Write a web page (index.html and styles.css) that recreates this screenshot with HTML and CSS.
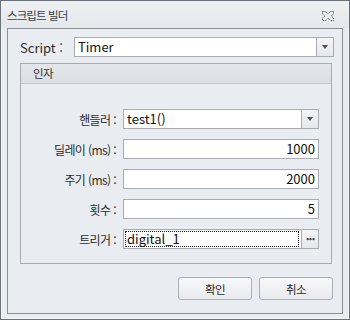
FILE: index.html
```html
<!DOCTYPE html>
<html lang="ko">
<head>
<meta charset="utf-8">
<link rel="stylesheet" href="styles.css">
</head>
<body>
<div class="window">
  <div class="titlebar">
    <span class="title">스크립트 빌더</span>
    <svg class="close" width="14" height="12" viewBox="0 0 14 12">
      <path d="M1.5 1.5h3l2.5 2.5 2.5-2.5h3v2.5l-2.5 2 2.5 2v2.5h-3L7 8 4.5 10.5h-3V8L4 6 1.5 4z" fill="none" stroke="#3c3f44" stroke-width="1" stroke-dasharray="1 1"/>
    </svg>
  </div>
  <div class="panel">
    <div class="script-row">
      <span class="script-label">Script :</span>
      <div class="combo wide">
        <span class="value">Timer</span>
        <span class="drop"><i class="tri"></i></span>
      </div>
    </div>
    <div class="group">
      <div class="group-head">인자</div>
      <div class="group-body">
        <div class="row">
          <span class="label">핸들러 :</span>
          <div class="combo">
            <span class="value">test1()</span>
            <span class="drop"><i class="tri"></i></span>
          </div>
        </div>
        <div class="row">
          <span class="label">딜레이 (ms) :</span>
          <div class="field num">1000</div>
        </div>
        <div class="row">
          <span class="label">주기 (ms) :</span>
          <div class="field num">2000</div>
        </div>
        <div class="row">
          <span class="label">횟수 :</span>
          <div class="field num">5</div>
        </div>
        <div class="row">
          <span class="label">트리거 :</span>
          <div class="combo">
            <span class="value focus">digital_1</span>
            <span class="drop dots">···</span>
          </div>
        </div>
      </div>
    </div>
    <div class="buttons">
      <button class="btn">확인</button>
      <button class="btn">취소</button>
    </div>
  </div>
</div>
</body>
</html>
```
FILE: styles.css
```css
* { box-sizing: border-box; }
html, body { margin: 0; padding: 0; }
body {
  width: 350px;
  height: 320px;
  background: #e9ecf0;
  font-family: "Noto Sans CJK KR", "Noto Sans", sans-serif;
  color: #1b1b1b;
}
.window {
  width: 350px;
  height: 320px;
  border: 1px solid #6c7279;
  box-shadow: inset 0 0 0 1px #f4f6f8;
  background: #e9ecf0;
  display: flex;
  flex-direction: column;
}
.titlebar {
  height: 27px;
  flex: none;
  display: flex;
  align-items: center;
  justify-content: space-between;
  padding: 0 14px 0 6px;
  background: linear-gradient(#eff1f4, #e4e7eb);
}
.title {
  font-size: 11.5px;
  color: #3a3d42;
  letter-spacing: -0.9px;
}
.close { display: block; margin-top: 2px; }
.panel {
  flex: 1;
  margin: 0 6px 5px 6px;
  border: 1px solid #8a8f95;
  padding: 8px 8px 0 12px;
  display: flex;
  flex-direction: column;
}
.script-row {
  display: flex;
  align-items: center;
  height: 20px;
}
.script-label {
  width: 54px;
  font-size: 13px;
  color: #2e2e2e;
}
.combo {
  flex: 1;
  height: 20px;
  border: 1px solid #a9adb3;
  background: #fff;
  display: flex;
}
.combo .value {
  flex: 1;
  font-size: 13px;
  line-height: 18px;
  padding-left: 3px;
  color: #111;
}
.combo .value.focus {
  margin: 1px 2px 1px 1px;
  line-height: 16px;
  padding-left: 2px;
  outline: 1px dotted #222;
  outline-offset: -1px;
}
.drop {
  width: 17px;
  flex: none;
  border-left: 1px solid #a9adb3;
  background: linear-gradient(#f3f4f6, #e6e8eb);
  display: flex;
  align-items: center;
  justify-content: center;
}
.tri {
  width: 0;
  height: 0;
  border-left: 3.5px solid transparent;
  border-right: 3.5px solid transparent;
  border-top: 4px solid #4d5157;
}
.dots {
  font-size: 12px;
  font-weight: bold;
  color: #444;
  letter-spacing: -1px;
  line-height: 18px;
}
.group {
  margin-top: 6px;
  margin-right: 2px;
  height: 201px;
  border: 1px solid #a9adb3;
  display: flex;
  flex-direction: column;
}
.group-head {
  height: 20px;
  flex: none;
  background: linear-gradient(#e2e5e9, #dcdfe3);
  border-bottom: 1px solid #c3c7cc;
  font-size: 11.5px;
  letter-spacing: -0.5px;
  line-height: 19px;
  padding-left: 12px;
  color: #333;
}
.group-body {
  padding: 25px 12px 0 0;
  display: flex;
  flex-direction: column;
  gap: 10px;
}
.row {
  display: flex;
  align-items: center;
  height: 20px;
}
.label {
  width: 102px;
  flex: none;
  text-align: right;
  padding-right: 7px;
  font-size: 12px;
  letter-spacing: -0.6px;
  color: #2e2e2e;
}
.field {
  flex: 1;
  height: 20px;
  border: 1px solid #a9adb3;
  background: #fff;
  font-size: 13px;
  line-height: 18px;
  padding: 0 3px;
  color: #111;
}
.num { text-align: right; }
.buttons {
  display: flex;
  justify-content: flex-end;
  gap: 7px;
  margin-top: 13px;
  padding-right: 1px;
}
.btn {
  width: 74px;
  height: 23px;
  border: 1px solid #abb0b6;
  border-radius: 3px;
  background: linear-gradient(#f7f8fa, #e9ebee);
  font-family: "Noto Sans CJK KR", sans-serif;
  font-size: 11.5px;
  letter-spacing: -0.5px;
  color: #2a2a2a;
  padding: 0;
}
```
